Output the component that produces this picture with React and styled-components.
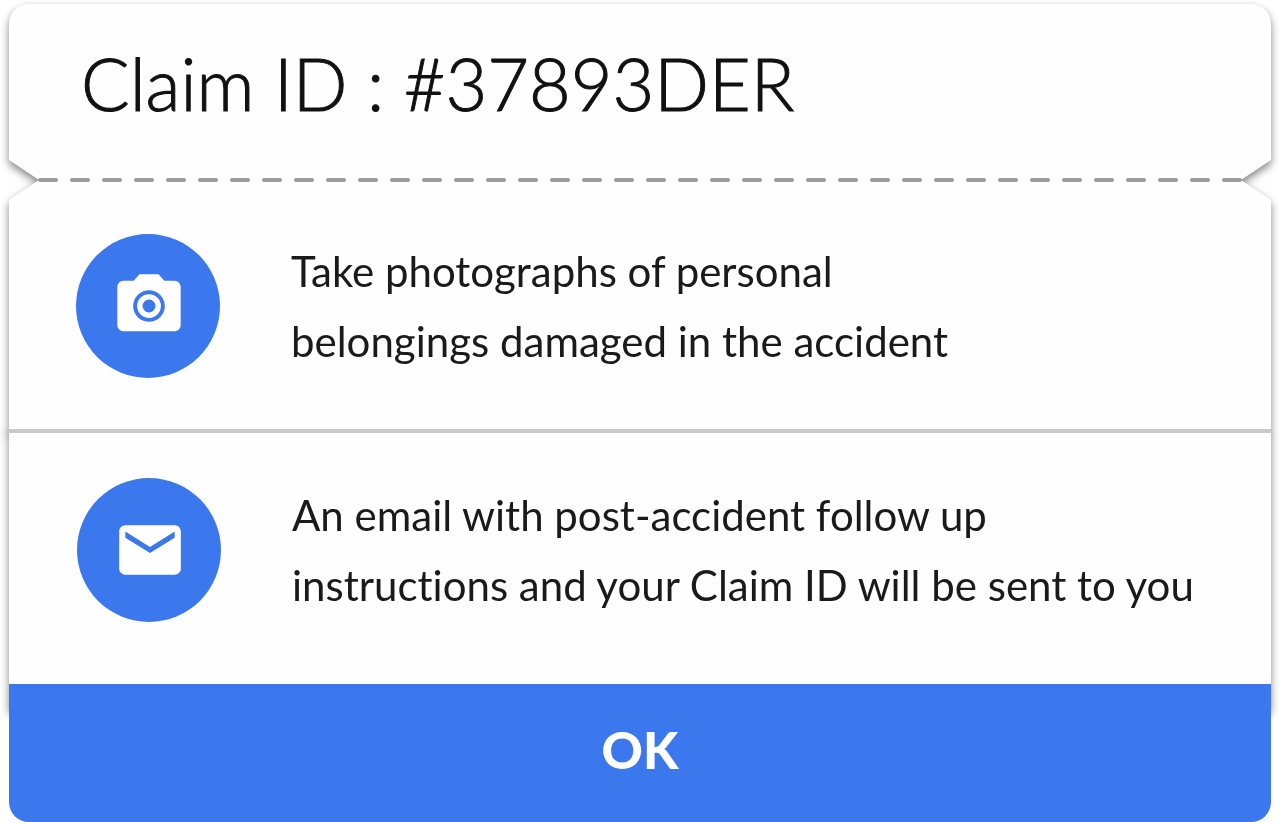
import React from "react";
import styled, { createGlobalStyle } from "styled-components";

const GlobalStyle = createGlobalStyle`
  *, *::before, *::after { box-sizing: border-box; }
  body {
    margin: 0;
    background: #ffffff;
    color: #141414;
    font-family: Lato, "Open Sans", "Liberation Sans", sans-serif;
    font-variant-ligatures: none;
  }
`;

const Dialog = styled.main`
  margin: 4px 9px 0;
`;

const Ticket = styled.div`
  filter: drop-shadow(0 4px 4px rgba(0, 0, 0, 0.48));
`;

const TicketHeader = styled.header`
  height: 176px;
  padding: 36px 72px 0;
  background: #fefefe;
  border-radius: 20px 20px 0 0;
  clip-path: polygon(
    0 0,
    100% 0,
    100% calc(100% - 20px),
    calc(100% - 30px) 100%,
    30px 100%,
    0 calc(100% - 20px)
  );
`;

const Title = styled.h1`
  margin: 0;
  font-size: 72px;
  line-height: 86px;
  font-weight: 300;
  color: #111111;
  -webkit-text-stroke: 1px #111111;
`;

const Perforation = styled.svg`
  display: block;
  position: relative;
  z-index: 1;
  width: calc(100% - 58px);
  height: 4px;
  margin: -2px 29px;
`;

const TicketBody = styled.ul`
  position: relative;
  isolation: isolate;
  margin: 0;
  padding: 0 0 68px;
  list-style: none;

  &::before {
    content: "";
    position: absolute;
    inset: 0;
    z-index: -1;
    background: #fefefe;
    clip-path: polygon(
      30px 0,
      calc(100% - 30px) 0,
      100% 20px,
      100% 100%,
      0 100%,
      0 20px
    );
  }
`;

const Step = styled.li`
  display: flex;
  align-items: center;
  gap: 71px;
  padding: 54px 67px 51px;

  & + & {
    margin: 0 -1px 0 -3px;
    padding: 45px 67px 20px 71px;
    border-top: 4px solid #c9c9c9;
  }
`;

const IconCircle = styled.span`
  display: flex;
  flex: none;
  align-items: center;
  justify-content: center;
  width: 144px;
  height: 144px;
  padding-left: 2px;
  border-radius: 50%;
  background: #3c78ed;
`;

const Icon = styled.svg`
  display: block;
  width: ${({ $size }) => $size}px;
  height: ${({ $size }) => $size}px;
  fill: #ffffff;
`;

const StepText = styled.p`
  margin: 0;
  font-size: 42px;
  line-height: 70px;
  color: #1a1a1a;
`;

const OkButton = styled.button`
  display: block;
  position: relative;
  width: 100%;
  height: 138px;
  margin: -26px 0 0;
  padding: 0 0 6px;
  border: 0;
  border-radius: 0 0 20px 20px;
  background: #3c78ed;
  color: #ffffff;
  font-family: inherit;
  font-size: 51px;
  line-height: 60px;
  font-weight: 900;
  cursor: pointer;
`;

const CameraIcon = () => (
  <Icon $size={76} viewBox="0 0 24 24" aria-hidden="true">
    <path
      fillRule="evenodd"
      d="M9 2 7.17 4H4c-1.1 0-2 .9-2 2v12c0 1.1.9 2 2 2h16c1.1 0 2-.9 2-2V6c0-1.1-.9-2-2-2h-3.17L15 2H9zm3 15c-2.76 0-5-2.24-5-5s2.24-5 5-5 5 2.24 5 5-2.24 5-5 5z"
    />
    <path
      fillRule="evenodd"
      d="M12 8.25a3.75 3.75 0 1 0 0 7.5 3.75 3.75 0 0 0 0-7.5zm0 1.7a2.05 2.05 0 1 1 0 4.1 2.05 2.05 0 0 1 0-4.1z"
    />
  </Icon>
);

const MailIcon = () => (
  <Icon $size={74} viewBox="0 0 24 24" aria-hidden="true">
    <path d="M20 4H4c-1.1 0-1.99.9-1.99 2L2 18c0 1.1.9 2 2 2h16c1.1 0 2-.9 2-2V6c0-1.1-.9-2-2-2zm0 4-8 5-8-5V6l8 5 8-5v2z" />
  </Icon>
);

export default function App() {
  return (
    <>
      <GlobalStyle />
      <Dialog>
        <Ticket>
          <TicketHeader>
            <Title>Claim ID : #37893DER</Title>
          </TicketHeader>
          <Perforation aria-hidden="true">
            <line
              x1="2"
              y1="2"
              x2="100%"
              y2="2"
              stroke="#9b9b9b"
              strokeWidth="4"
              strokeLinecap="round"
              strokeDasharray="16 16"
            />
          </Perforation>
          <TicketBody>
            <Step>
              <IconCircle>
                <CameraIcon />
              </IconCircle>
              <StepText>
                Take photographs of personal
                <br />
                belongings damaged in the accident
              </StepText>
            </Step>
            <Step>
              <IconCircle>
                <MailIcon />
              </IconCircle>
              <StepText>
                An email with post-accident follow up
                <br />
                instructions and your Claim ID will be sent to you
              </StepText>
            </Step>
          </TicketBody>
        </Ticket>
        <OkButton type="button">OK</OkButton>
      </Dialog>
    </>
  );
}
